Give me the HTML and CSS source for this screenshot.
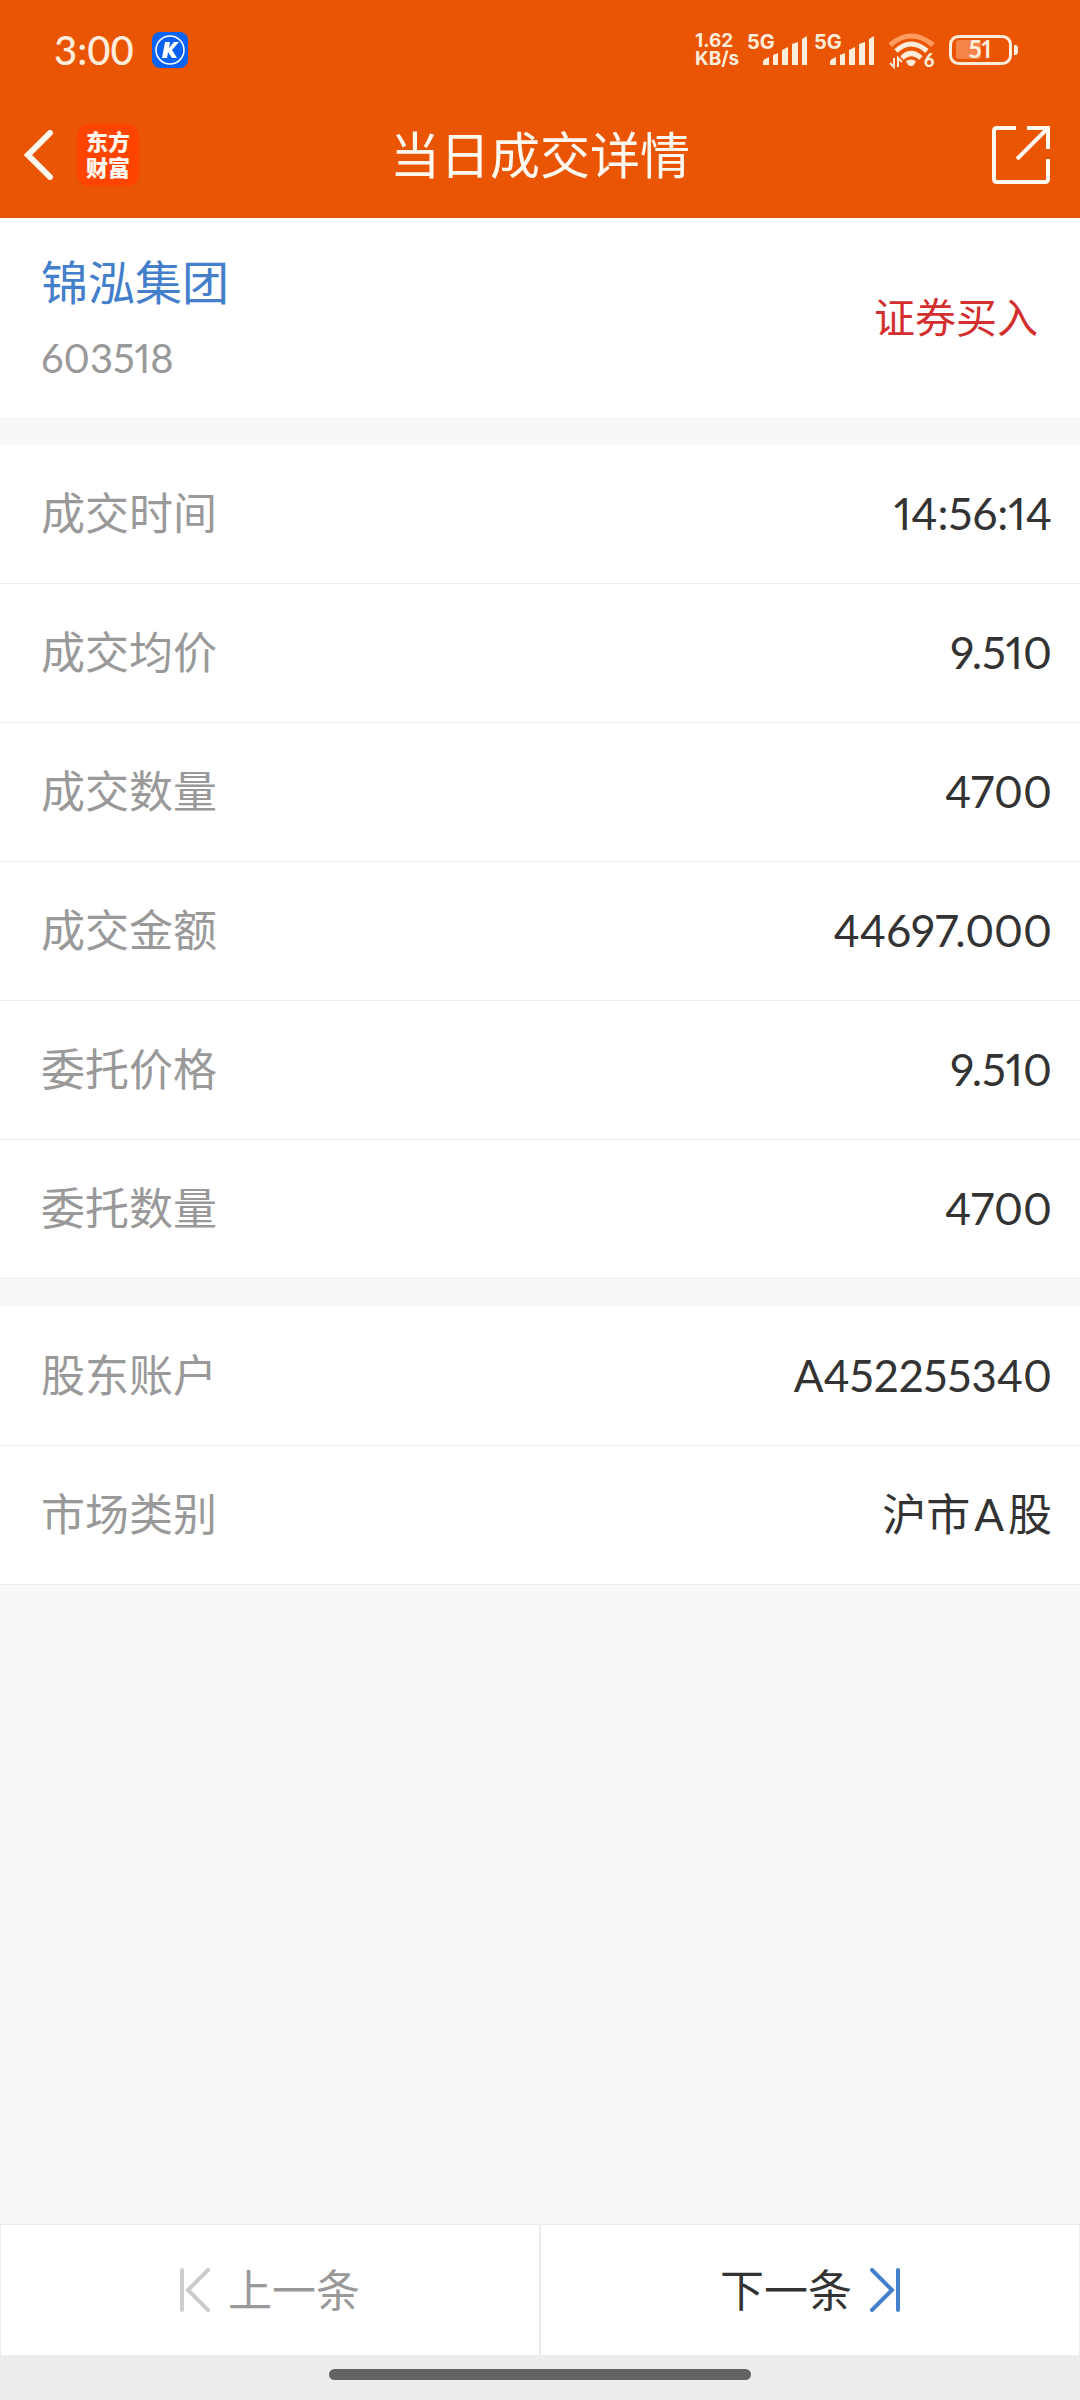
FILE: index.html
```html
<!DOCTYPE html>
<html lang="zh-CN">
<head>
    <meta charset="UTF-8">
    <meta name="viewport" content="width=device-width, initial-scale=1.0">
    <title>当日成交详情</title>
    <link rel="stylesheet" href="styles.css">
</head>
<body>
    <header class="top">
        <div class="status-bar">
            <div class="status-left">
                <span class="clock">3:00</span>
                <svg class="k-icon" width="36" height="36" viewBox="0 0 36 36">
                    <rect width="36" height="36" rx="8" fill="#0a63f5"/>
                    <circle cx="18" cy="18" r="14" fill="none" stroke="#fff" stroke-width="1.5"/>
                    <path d="M13 10h5l-1 6 5-6h5l-7 8 5 8h-5l-4-6-1 6h-5z" fill="#fff"/>
                </svg>
            </div>
            <div class="status-right">
                <div class="speed"><span>1.62</span><span>KB/s</span></div>
                <svg class="signal" width="62" height="40" viewBox="0 0 62 40">
                    <text class="signal-text" x="1" y="19">5G</text>
                    <path d="M17 32q0-2 2-3l4-2v8h-6zM27 25l5-2v12h-5zM36 20l6-3v18h-6zM46 14l6-2v23h-6zM56 9l5-3v29h-5z" fill="#ffeddc"/>
                </svg>
                <svg class="signal" width="62" height="40" viewBox="0 0 62 40">
                    <text class="signal-text" x="1" y="19">5G</text>
                    <path d="M17 32q0-2 2-3l4-2v8h-6zM27 25l5-2v12h-5zM36 20l6-3v18h-6zM46 14l6-2v23h-6zM56 9l5-3v29h-5z" fill="#ffeddc"/>
                </svg>
                <svg class="wifi" width="48" height="40" viewBox="0 0 48 40">
                    <g fill="none" stroke="#ffeddc" stroke-width="5">
                        <path d="M2 15Q23-3 45 15" stroke="#ff9a60"/>
                        <path d="M8 21Q23 7 39 21"/>
                        <path d="M14 28Q23 19 33 28"/>
                        <path d="M6 28v9l-4-4M10 37v-9l4 4" stroke-width="2"/>
                    </g>
                    <path d="M18 31q5-3 10 0l-2 4q-3 2-6 0z" fill="#ffeddc"/>
                    <text class="wifi-text" x="36" y="37">6</text>
                </svg>
                <svg class="battery" width="70" height="30" viewBox="0 0 70 30">
                    <rect x="1.5" y="1.5" width="60" height="27" rx="8" fill="none" stroke="#ffeddc" stroke-width="3"/>
                    <rect x="7" y="5" width="25" height="19" rx="3" fill="#f58449"/>
                    <path d="M65 10h1q3 0 3 3v4q0 3-3 3h-1z" fill="#ffeddc"/>
                    <text class="battery-text" x="31" y="23">51</text>
                </svg>
            </div>
        </div>
        <div class="nav-bar">
            <div class="nav-left">
                <button class="icon-btn" type="button" aria-label="返回">
                    <svg width="30" height="50" viewBox="0 0 30 50">
                        <path d="M26 3 4 25l22 22" fill="none" stroke="#fff8f0" stroke-width="6" stroke-linecap="round"/>
                    </svg>
                </button>
                <div class="logo"><span>东方</span><span>财富</span></div>
            </div>
            <h1>当日成交详情</h1>
            <div class="nav-right">
                <button class="icon-btn" type="button" aria-label="分享">
                    <svg width="58" height="58" viewBox="0 0 58 58">
                        <path d="M24 2H5Q2 2 2 5v48q0 3 3 3h48q3 0 3-3V33M35 2h21v21M56 2 25 33" fill="none" stroke="#fff8f0" stroke-width="4"/>
                    </svg>
                </button>
            </div>
        </div>
    </header>

    <main>
        <section class="stock">
            <div>
                <a class="stock-name" href="#">锦泓集团</a>
                <div class="stock-code">603518</div>
            </div>
            <span class="direction">证券买入</span>
        </section>

        <dl class="details">
            <div class="row"><dt>成交时间</dt><dd>14:56:14</dd></div>
            <div class="row"><dt>成交均价</dt><dd>9.510</dd></div>
            <div class="row"><dt>成交数量</dt><dd>4700</dd></div>
            <div class="row"><dt>成交金额</dt><dd>44697.000</dd></div>
            <div class="row"><dt>委托价格</dt><dd>9.510</dd></div>
            <div class="row"><dt>委托数量</dt><dd>4700</dd></div>
        </dl>

        <dl class="details">
            <div class="row"><dt>股东账户</dt><dd>A452255340</dd></div>
            <div class="row"><dt>市场类别</dt><dd>沪市<span class="latin">A</span>股</dd></div>
        </dl>
    </main>

    <footer>
        <div class="pager">
            <button class="prev" type="button" disabled>
                <svg width="30" height="44" viewBox="0 0 30 44">
                    <path d="M2 2v40M28 2 8 22l20 20" fill="none" stroke="#ccc" stroke-width="4" stroke-linecap="round"/>
                </svg>
                上一条
            </button>
            <button class="next" type="button">
                下一条
                <svg width="30" height="44" viewBox="0 0 30 44">
                    <path d="M28 2v40M2 2l20 20L2 42" fill="none" stroke="#437fca" stroke-width="4" stroke-linecap="round"/>
                </svg>
            </button>
        </div>
        <div class="gesture"><div class="gesture-bar"></div></div>
    </footer>
</body>
</html>
```
FILE: styles.css
```css
* {
    box-sizing: border-box;
}
body {
    margin: 0;
    min-height: 100vh;
    display: flex;
    flex-direction: column;
    font-family: Lato, "Noto Sans CJK SC", sans-serif;
    font-variant-numeric: proportional-nums;
    line-height: 60px;
    background-color: #f7f8fa;
    color: #333;
}
button {
    padding: 0;
    border: none;
    background: none;
    font: inherit;
    color: inherit;
    cursor: pointer;
}
svg {
    display: block;
}

/* header */
.top {
    background-color: #ea5504;
    color: #fff8f0;
}
.status-bar {
    display: flex;
    justify-content: space-between;
    align-items: center;
    height: 92px;
    padding: 8px 61px 0 54px;
    color: #ffeddc;
}
.status-left,
.status-right {
    display: flex;
    align-items: center;
}
.status-left {
    gap: 18px;
}
.status-right {
    gap: 5px;
}
.clock {
    font-size: 40px;
    font-weight: 500;
    font-variant-numeric: tabular-nums;
}
.speed {
    display: flex;
    flex-direction: column;
    width: 46px;
    font-family: Inter, sans-serif;
    font-size: 19px;
    font-weight: 700;
    line-height: 18px;
}
.signal-text {
    font-family: Inter, sans-serif;
    font-size: 20px;
    font-weight: 700;
    fill: #ffeddc;
}
.wifi-text {
    font-size: 18px;
    font-weight: 900;
    fill: #ffeddc;
}
.wifi,
.battery {
    margin-left: 8px;
}
.battery-text {
    font-size: 24px;
    font-weight: 700;
    fill: #ffeddc;
    text-anchor: middle;
}
.nav-bar {
    display: grid;
    grid-template-columns: 1fr auto 1fr;
    align-items: center;
    height: 126px;
    padding: 0 24px;
}
.nav-left {
    display: flex;
    align-items: center;
    gap: 23px;
}
.nav-right {
    display: flex;
    justify-content: flex-end;
    padding-right: 6px;
}
.logo {
    display: flex;
    flex-direction: column;
    align-items: center;
    justify-content: center;
    width: 62px;
    height: 62px;
    border-radius: 12px;
    background-color: #ff4400;
    font-size: 22px;
    font-weight: 900;
    line-height: 26px;
}
h1 {
    margin: 0;
    font-size: 50px;
    font-weight: 400;
}

/* stock */
.stock {
    display: flex;
    justify-content: space-between;
    align-items: center;
    height: 199px;
    padding: 0 42px 0 41px;
    background-color: #fff;
}
.stock-name {
    display: block;
    padding-top: 4px;
    font-size: 47px;
    line-height: 76px;
    color: #437fca;
    text-decoration: none;
}
.stock-code {
    font-size: 40px;
    line-height: 76px;
    color: #999;
}
.direction {
    font-size: 41px;
    color: #d32f2f;
}

/* detail rows */
.details {
    margin: 28px 0 0;
    background-color: #fff;
}
.row {
    display: flex;
    justify-content: space-between;
    align-items: center;
    height: 139px;
    padding: 0 28px 2px 41px;
    border-bottom: 1px solid #ebecee;
    font-size: 44px;
}
.row dt {
    color: #999;
}
.row dd {
    margin: 0;
}
.latin {
    margin: 0 4px;
}

/* footer */
footer {
    margin-top: auto;
}
.pager {
    display: flex;
}
.pager button {
    flex: 1;
    display: flex;
    justify-content: center;
    align-items: center;
    gap: 18px;
    height: 131px;
    border: 1px solid #ebebeb;
    border-bottom: none;
    background-color: #fff;
    font-size: 44px;
}
.pager .prev {
    color: #999;
}
.gesture {
    display: flex;
    justify-content: center;
    height: 45px;
    padding-top: 14px;
    background-color: #ededed;
}
.gesture-bar {
    width: 39%;
    height: 11px;
    border-radius: 6px;
    background-color: #636363;
}
```
